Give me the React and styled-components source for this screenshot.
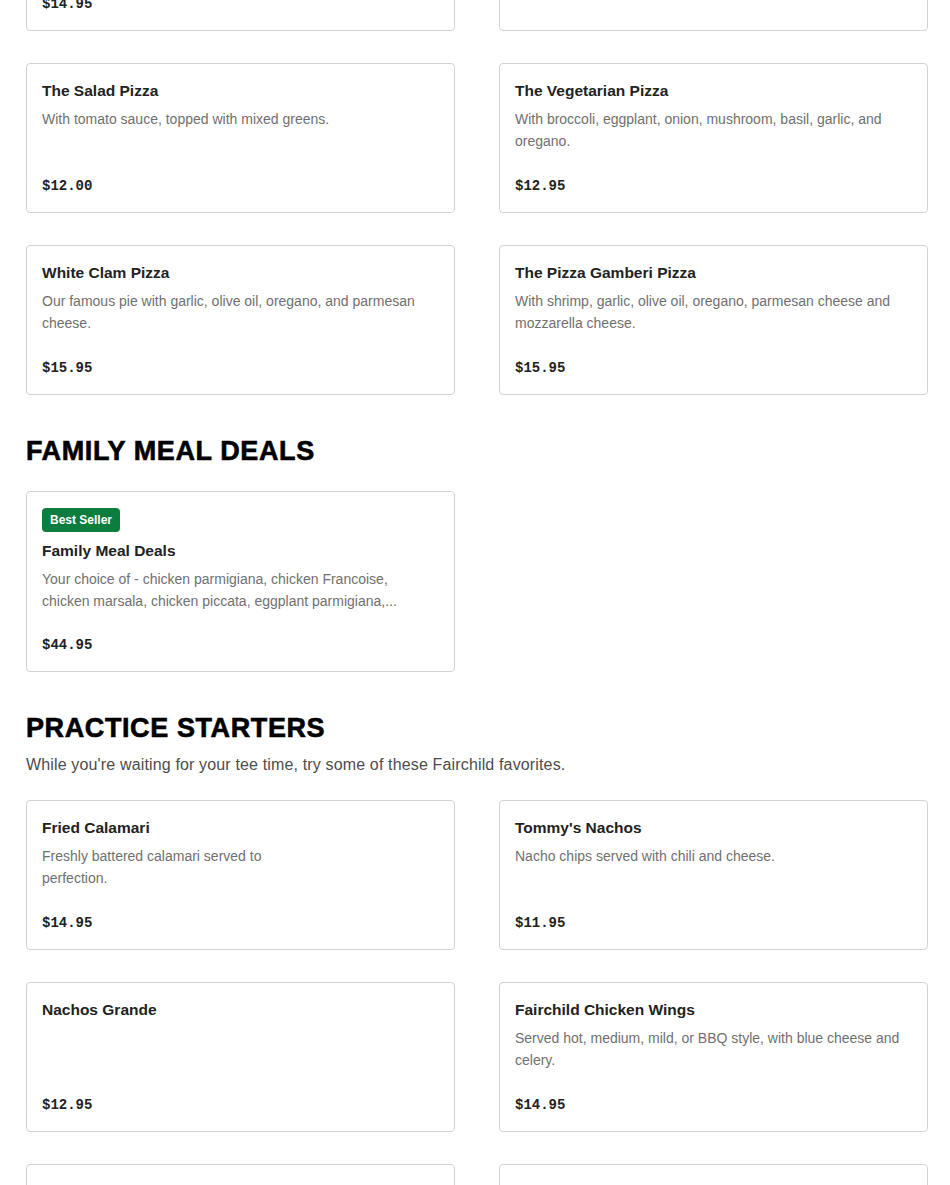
import React from "react";
import styled, { createGlobalStyle } from "styled-components";

const GlobalStyle = createGlobalStyle`
  * { box-sizing: border-box; }
  html, body {
    margin: 0;
    padding: 0;
    background: #fff;
    overflow: hidden;
  }
  body {
    font-family: "Liberation Sans", Arial, sans-serif;
    color: #222;
  }
`;

const pizzas = [
  { name: "The Pepperoni Pizza", desc: "", price: "$14.95" },
  { name: "The Margherita Pizza", desc: "", price: "" },
  {
    name: "The Salad Pizza",
    desc: "With tomato sauce, topped with mixed greens.",
    price: "$12.00",
  },
  {
    name: "The Vegetarian Pizza",
    desc: "With broccoli, eggplant, onion, mushroom, basil, garlic, and oregano.",
    price: "$12.95",
  },
  {
    name: "White Clam Pizza",
    desc: "Our famous pie with garlic, olive oil, oregano, and parmesan cheese.",
    price: "$15.95",
  },
  {
    name: "The Pizza Gamberi Pizza",
    desc: "With shrimp, garlic, olive oil, oregano, parmesan cheese and mozzarella cheese.",
    price: "$15.95",
  },
];

const deals = [
  {
    name: "Family Meal Deals",
    desc: "Your choice of - chicken parmigiana, chicken Francoise, chicken marsala, chicken piccata, eggplant parmigiana,...",
    price: "$44.95",
    badge: "Best Seller",
  },
];

const starters = [
  {
    name: "Fried Calamari",
    desc: "Freshly battered calamari served to perfection.",
    price: "$14.95",
    narrow: true,
  },
  {
    name: "Tommy's Nachos",
    desc: "Nacho chips served with chili and cheese.",
    price: "$11.95",
  },
  { name: "Nachos Grande", desc: "", price: "$12.95" },
  {
    name: "Fairchild Chicken Wings",
    desc: "Served hot, medium, mild, or BBQ style, with blue cheese and celery.",
    price: "$14.95",
  },
  { name: "Mozzarella Sticks Basket", desc: "", price: "$10.95" },
  { name: "Chicken Quesadillas", desc: "", price: "$13.95" },
];

export default function App() {
  return (
    <>
      <GlobalStyle />
      <Page>
        <Section>
          <Grid>
            {pizzas.map((item) => (
              <MenuCard key={item.name} item={item} />
            ))}
          </Grid>
        </Section>

        <Section>
          <Heading>FAMILY MEAL DEALS</Heading>
          <Grid>
            {deals.map((item) => (
              <MenuCard key={item.name} item={item} />
            ))}
          </Grid>
        </Section>

        <Section>
          <Heading>PRACTICE STARTERS</Heading>
          <Intro>
            While you're waiting for your tee time, try some of these Fairchild
            favorites.
          </Intro>
          <Grid>
            {starters.map((item) => (
              <MenuCard key={item.name} item={item} />
            ))}
          </Grid>
        </Section>
      </Page>
    </>
  );
}

function MenuCard({ item }) {
  return (
    <Card>
      {item.badge && <Badge>{item.badge}</Badge>}
      <ItemName>{item.name}</ItemName>
      {item.desc && <Desc $narrow={item.narrow}>{item.desc}</Desc>}
      {item.price && <Price>{item.price}</Price>}
    </Card>
  );
}

const Page = styled.main`
  width: 950px;
  padding: 0 22px 0 26px;
  margin-top: -119px;
`;

const Section = styled.section`
  & + & {
    margin-top: 40px;
  }
`;

const Heading = styled.h2`
  margin: 0 0 24px;
  font-family: "Liberation Sans", Arial, sans-serif;
  font-weight: 900;
  font-size: 27px;
  line-height: 32px;
  letter-spacing: 0.6px;
  -webkit-text-stroke: 0.6px #000;
  color: #000;
`;

const Intro = styled.p`
  margin: -15px 0 23px;
  font-size: 16px;
  line-height: 24px;
  letter-spacing: 0.15px;
  color: #4d4d4d;
`;

const Grid = styled.div`
  display: grid;
  grid-template-columns: 429px 429px;
  column-gap: 44px;
  row-gap: 32px;
`;

const Card = styled.article`
  display: flex;
  flex-direction: column;
  align-items: flex-start;
  min-height: 150px;
  padding: 16px 16px 16px 15px;
  border: 1px solid #d2d2d2;
  border-radius: 4px;
  background: #fff;
`;

const Badge = styled.span`
  display: inline-block;
  height: 24px;
  padding: 0 8px;
  margin-bottom: 8px;
  border-radius: 4px;
  background: #0b7d3e;
  color: #fff;
  font-size: 12px;
  font-weight: 700;
  line-height: 24px;
`;

const ItemName = styled.h3`
  margin: 0;
  font-size: 15.5px;
  font-weight: 700;
  line-height: 22px;
  color: #222;
`;

const Desc = styled.p`
  margin: 6px 0 0;
  max-width: ${(p) => (p.$narrow ? "260px" : "100%")};
  font-size: 14px;
  line-height: 22px;
  color: #707070;
  display: -webkit-box;
  -webkit-line-clamp: 2;
  -webkit-box-orient: vertical;
  overflow: hidden;
`;

const Price = styled.div`
  margin-top: auto;
  padding-top: 23px;
  font-family: "Liberation Mono", "Courier New", monospace;
  font-size: 14px;
  font-weight: 700;
  line-height: 20px;
  color: #222;
`;
